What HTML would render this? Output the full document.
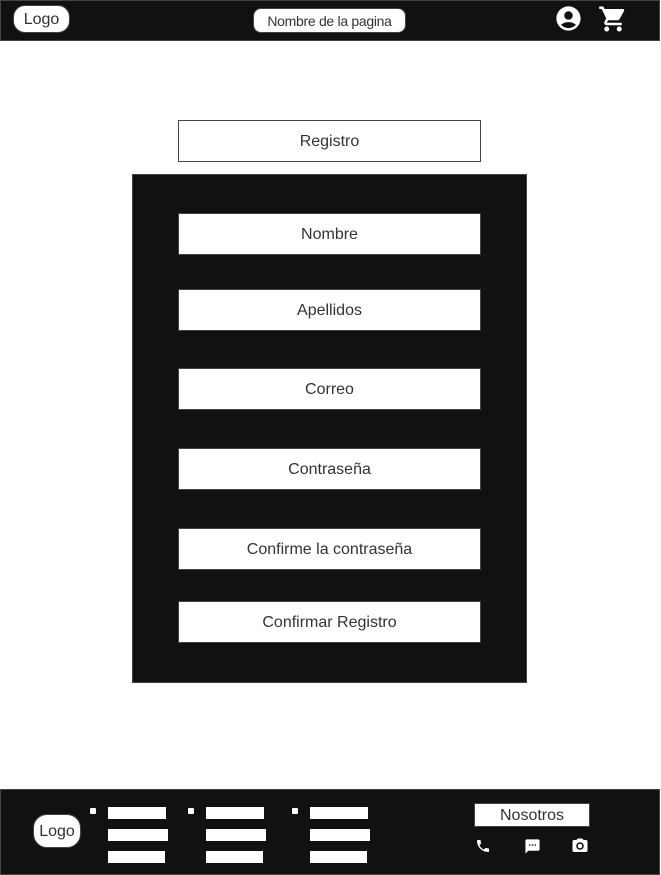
<!DOCTYPE html>
<html><head><meta charset="utf-8"><style>
*{margin:0;padding:0;box-sizing:border-box}
body{width:661px;height:875px;background:#fff;position:relative;font-family:"Liberation Sans",sans-serif;overflow:hidden}
.a{position:absolute}
.hdr{left:0;top:0;width:660px;height:41px;background:#111;border:1px solid #444}
.pill{background:#fff;border:1px solid #444;color:#333;display:flex;align-items:center;justify-content:center;padding-top:1px}
.box{position:absolute;left:178px;width:303px;height:42px;background:#fff;border:1px solid #444;color:#333;font-size:16px;display:flex;align-items:center;justify-content:center;padding-top:2px}
.w{position:absolute;background:#fff;height:12px}
.d{position:absolute;background:#fff;width:6px;height:6px;border-radius:1px}
</style></head><body>
<div class="a hdr"></div>
<div class="a pill" style="left:13px;top:5px;width:57px;height:28px;border-radius:12px;font-size:16px">Logo</div>
<div class="a pill" style="left:253px;top:8px;width:153px;height:25px;border-radius:8px;font-size:14px;letter-spacing:-0.3px">Nombre de la pagina</div>
<svg class="a" style="left:554px;top:4px" width="29" height="29" viewBox="0 0 24 24"><path fill="#fff" d="M12 2C6.48 2 2 6.48 2 12s4.48 10 10 10 10-4.48 10-10S17.52 2 12 2zm0 4c1.93 0 3.5 1.57 3.5 3.5S13.930 13 12 13s-3.5-1.57-3.5-3.5S10.07 6 12 6zm0 14c-2.03 0-4.43-.82-6.14-2.88C7.55 15.8 9.68 15 12 15s4.45.8 6.14 2.12C16.43 19.18 14.03 20 12 20z"/></svg>
<svg class="a" style="left:598px;top:4px" width="30" height="30" viewBox="0 0 24 24"><path fill="#fff" d="M7 18c-1.1 0-1.99.9-1.99 2S5.9 22 7 22s2-.9 2-2-.9-2-2-2zM1 2v2h2l3.6 7.590-1.35 2.45c-.16.28-.25.61-.25.96 0 1.1.9 2 2 2h12v-2H7.42c-.14 0-.25-.11-.25-.25l.03-.12.9-1.63h7.45c.75 0 1.41-.41 1.75-1.03l3.58-6.49A1 1 0 0 0 20 4H5.21l-.94-2H1zm16 16c-1.1 0-1.99.9-1.99 2s.89 2 1.990 2 2-.9 2-2-.9-2-2-2z"/></svg>

<div class="box" style="top:120px;background:#fff">Registro</div>
<div class="a" style="left:132px;top:174px;width:395px;height:509px;background:#111;border:1px solid #444"></div>
<div class="box" style="top:213px">Nombre</div>
<div class="box" style="top:289px">Apellidos</div>
<div class="box" style="top:368px">Correo</div>
<div class="box" style="top:448px">Contraseña</div>
<div class="box" style="top:528px">Confirme la contraseña</div>
<div class="box" style="top:601px">Confirmar Registro</div>

<div class="a" style="left:0;top:789px;width:660px;height:86px;background:#111;border:1px solid #444"></div>
<div class="a pill" style="left:33px;top:814px;width:48px;height:34px;border-radius:14px;font-size:16px">Logo</div>
<div class="d" style="left:90px;top:808px"></div>
<div class="d" style="left:188px;top:808px"></div>
<div class="d" style="left:292px;top:808px"></div>
<div class="w" style="left:108px;top:807px;width:58px"></div>
<div class="w" style="left:108px;top:829px;width:60px"></div>
<div class="w" style="left:108px;top:851px;width:57px"></div>
<div class="w" style="left:206px;top:807px;width:58px"></div>
<div class="w" style="left:206px;top:829px;width:60px"></div>
<div class="w" style="left:206px;top:851px;width:57px"></div>
<div class="w" style="left:310px;top:807px;width:58px"></div>
<div class="w" style="left:310px;top:829px;width:60px"></div>
<div class="w" style="left:310px;top:851px;width:57px"></div>
<div class="a" style="left:474px;top:803px;width:116px;height:24px;background:#fff;border:1px solid #444;color:#333;font-size:16px;display:flex;align-items:center;justify-content:center;padding-top:2px">Nosotros</div>
<svg class="a" style="left:475px;top:838px" width="16" height="16" viewBox="0 0 24 24"><path fill="#fff" d="M6.62 10.79c1.44 2.830 3.76 5.14 6.59 6.59l2.2-2.2c.27-.27.67-.36 1.02-.24 1.12.37 2.33.57 3.57.57.55 0 1 .45 1 1V20c0 .55-.45 1-1 1-9.39 0-17-7.61-17-17 0-.55.45-1 1-1h3.5c.55 0 1 .45 1 1 0 1.25.2 2.45.57 3.57.11.35.03.74-.25 1.020l-2.2 2.2z"/></svg>
<svg class="a" style="left:524px;top:838px" width="17" height="17" viewBox="0 0 24 24"><path fill="#fff" d="M20 2H4c-1.1 0-2 .9-2 2v18l4-4h14c1.1 0 2-.9 2-2V4c0-1.1-.9-2-2-2zM9 11H7V9h2v2zm4 0h-2V9h2v2zm4 0h-2V9h2v2z"/></svg>
<svg class="a" style="left:571px;top:837px" width="18" height="18" viewBox="0 0 24 24"><path fill="#fff" d="M9 2L7.17 4H4c-1.1 0-2 .9-2 2v12c0 1.1.9 2 2 2h16c1.1 0 2-.9 2-2V6c0-1.1-.9-2-2-2h-3.17L15 2H9zm3 15c-2.76 0-5-2.24-5-5s2.24-5 5-5 5 2.24 5 5-2.24 5-5 5zm0-8a3 3 0 1 0 0 6 3 3 0 0 0 0-6z"/></svg>
</body></html>
